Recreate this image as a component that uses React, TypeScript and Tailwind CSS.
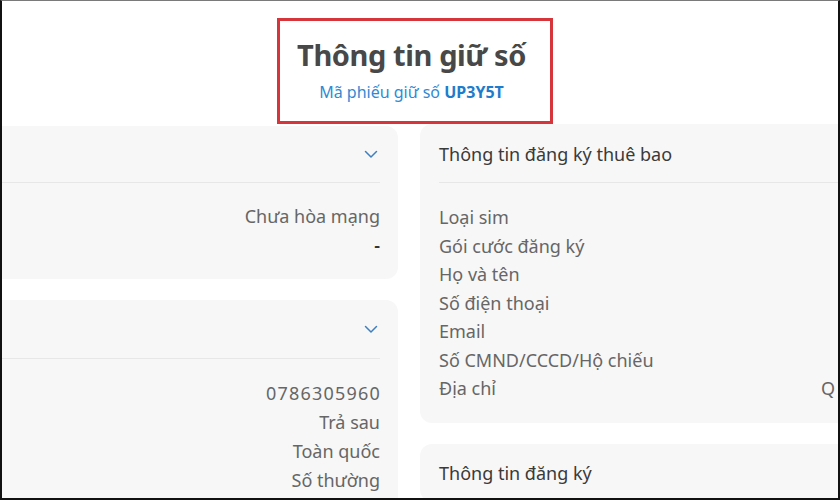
import React from 'react';

const Chevron = () => (
	<svg width="14" height="9" viewBox="0 0 14 9" fill="none" className="text-[#3f7fc0]">
		<path d="M1.5 1.5 L7 7 L12.5 1.5" stroke="currentColor" strokeWidth="1.5" strokeLinecap="round" strokeLinejoin="round" />
	</svg>
);

const subscriberRows = [
	'Loại sim',
	'Gói cước đăng ký',
	'Họ và tên',
	'Số điện thoại',
	'Email',
	'Số CMND/CCCD/Hộ chiếu',
	'Địa chỉ',
];

const simRows = ['Trả sau', 'Toàn quốc', 'Số thường'];

export default function App() {
	return (
		<div className="relative w-[840px] h-[500px] overflow-hidden bg-white font-['Noto_Sans','Open_Sans',sans-serif] border-t border-t-[#7a7a7a] border-x-2 border-x-[#111] border-b-2 border-b-[#111]">
			{/* Title */}
			<div className="flex justify-center pt-[17px] pr-[11px]">
				<div className="w-[276px] h-[106px] border-[3px] border-[#d7353c] flex flex-col items-center">
					<h1 className="mt-[14px] text-[29px] leading-[40px] font-bold text-[#484848] tracking-[-0.4px] pr-[6px]">
						Thông tin giữ số
					</h1>
					<p className="mt-[6px] text-[16px] leading-[22px] text-[#2f8ad3] pr-[6px]">
						Mã phiếu giữ số <span className="font-bold text-[#1f7ccc]">UP3Y5T</span>
					</p>
				</div>
			</div>

			{/* Cards */}
			<div className="flex items-start gap-[22px]">
				{/* Left column */}
				<div className="ml-[-22px] w-[418px] shrink-0 flex flex-col gap-[21px] mt-[2px]">
					<div className="bg-[#f7f7f7] rounded-[12px] pr-[18px] pl-[22px]">
						<div className="h-[57px] flex items-center justify-end border-b border-[#e7e7e7] pr-[2px]">
							<Chevron />
						</div>
						<div className="pt-[19px] pb-[20px] flex flex-col items-end text-[18px] leading-[28.5px] text-[#666]">
							<span>Chưa hòa mạng</span>
							<span className="text-[#333] font-semibold">-</span>
						</div>
					</div>
					<div className="bg-[#f7f7f7] rounded-[12px] pr-[18px] pl-[22px]">
						<div className="h-[59px] flex items-center justify-end border-b border-[#e7e7e7] pr-[2px]">
							<Chevron />
						</div>
						<div className="pt-[20px] pb-[20px] flex flex-col items-end text-[18px] leading-[29px] text-[#666]">
							<span className="tracking-[1.2px] mr-[-1px]">0786305960</span>
							{simRows.map((r) => (
								<span key={r}>{r}</span>
							))}
						</div>
					</div>
				</div>

				{/* Right column */}
				<div className="w-[440px] shrink-0 flex flex-col gap-[21px]">
					<div className="bg-[#f7f7f7] rounded-[12px] pl-[19px] pr-[20px]">
						<div className="h-[59px] pt-[2px] flex items-center border-b border-[#e7e7e7] text-[18px] text-[#3a3a3a]">
							Thông tin đăng ký thuê bao
						</div>
						<div className="pt-[20px] pb-[20px] flex flex-col text-[18px] leading-[28.5px] text-[#666]">
							{subscriberRows.map((r, i) => (
								<div key={r} className="flex justify-between">
									<span>{r}</span>
									{i === subscriberRows.length - 1 && <span className="mr-[5px]">Q</span>}
								</div>
							))}
						</div>
					</div>
					<div className="bg-[#f7f7f7] rounded-[12px] pl-[19px] pr-[20px]">
						<div className="h-[58px] pt-[2px] flex items-center text-[18px] text-[#3a3a3a]">Thông tin đăng ký</div>
					</div>
				</div>
			</div>
		</div>
	);
}
